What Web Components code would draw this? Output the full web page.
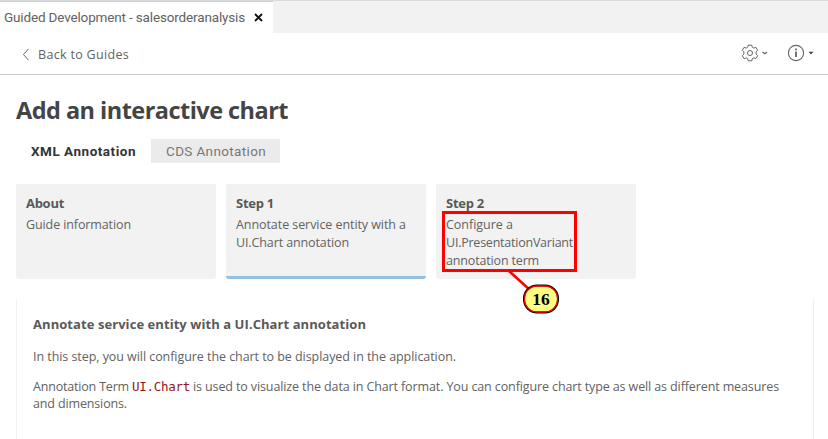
<!DOCTYPE html>
<html lang="en">
<head>
<meta charset="utf-8">
<title>Guided Development</title>
<style>
html,body{margin:0;height:100%;overflow:hidden;background:#fff}
body{font:12.5px/18px "Open Sans","Noto Sans",sans-serif;color:#626262}
</style>
</head>
<body>
<guide-app></guide-app>
<script>
const define = (name, html, setup) => customElements.define(name, class extends HTMLElement {
  connectedCallback() {
    if (this.shadowRoot) return;
    this.attachShadow({mode: 'open'}).innerHTML = html;
    if (setup) setup(this);
  }
});

// A single line of text whose tracking is set so that it fills the width in "w".
define('text-line', `<style>:host{display:block;white-space:pre;width:max-content}span{display:inline-block}</style><span><slot></slot></span>`, el => {
  const span = el.shadowRoot.querySelector('span');
  const n = el.textContent.length;
  const gap = (+el.getAttribute('w') - span.getBoundingClientRect().width) / n;
  span.style.letterSpacing = gap.toFixed(4) + 'px';
});

define('tab-strip', `<style>
:host{display:flex;height:33px;box-sizing:border-box;background:#f2f2f2;border-top:1px solid #d9dbe0;font:13.5px/18px Roboto,"Liberation Sans",sans-serif}
.tab{display:flex;box-sizing:border-box;width:273px;height:32px;background:#fff;border-top:1px solid #b9d5e4;padding:6px 0 0 4px}
svg{margin:5px 0 0 9px}
</style><div class="tab"><text-line w="241">Guided Development - salesorderanalysis</text-line>
<svg width="9" height="9" viewBox="0 0 9 9"><path d="M1 1l7 7M8 1l-7 7" stroke="#111" stroke-width="1.8"/></svg></div>`);

define('guide-toolbar', `<style>
:host{display:flex;height:42px;box-sizing:border-box;border-bottom:1px solid #ccc;padding-left:22px;align-items:flex-start}
.back{margin-top:15px}text-line{margin:13px auto 0 9px}
svg{flex:none;fill:none;stroke:#666}
.gear{margin:11px 0 0}.info{margin:11px 13px 0 18px}
</style>
<svg class="back" width="7" height="13" viewBox="0 0 7 13"><path d="M6.500 .8L1.500 6.500l5 5.700"/></svg>
<text-line w="91">Back to Guides</text-line>
<svg class="gear" width="28" height="18" viewBox="0 0 28 18"><path d="M7.200 1.200h3.600l.5 2.100 1.500.8 2.100-.8 1.800 3-1.600 1.600v2.200l1.600 1.600-1.800 3-2.100-.8-1.500.8-.5 2.100H7.200l-.5-2.100-1.500-.8-2.100.8-1.800-3 1.600-1.600V7.900L1.300 6.300l1.800-3 2.100.8 1.500-.8z"/><circle cx="9" cy="9" r="2.500"/><path d="M21.500 8l2.300 1.700L26 8" stroke-width="1.300"/></svg>
<svg class="info" width="28" height="18" viewBox="0 0 28 18"><circle cx="9" cy="9" r="7.600" stroke-width="1.100"/><path d="M9 7.500V13M9 4.500v1.700" stroke-width="1.800"/><path d="M21.500 7.800h5l-2.500 2.700z" fill="#444" stroke="none"/></svg>`);

define('kind-tab', `<style>
:host{display:block;box-sizing:border-box;height:24px;padding:3px 14px 0 15px;font:13.500px/18px Roboto,"Liberation Sans",sans-serif;color:#777;background:#ebebeb}
:host([selected]){padding-right:15px;background:none;font-weight:bold;color:#333}
</style><slot></slot>`);

define('step-card', `<style>
:host{display:block;box-sizing:border-box;width:200px;height:95px;padding:10px;background:#f2f2f2;border-radius:0 0 3px 3px}
:host([current]){border-bottom:3px solid #91c0e0}
.name{font-weight:bold;font-size:13px;color:#595959;margin-bottom:4px}
</style><div class="name"><slot name="name"></slot></div><slot></slot>`);

define('guide-panel', `<style>
:host{display:block;box-sizing:border-box;width:798px;height:140px;border:solid #f0f0f0;border-width:0 1px;padding:16px 16px 0}
.head{font-weight:bold;font-size:13px;color:#595959}
.p{margin-top:15px}.q{margin-top:12px;line-height:17px}
.row{display:flex;height:17px}
.code{font:12.500px/18px "DejaVu Sans Mono",monospace;color:#931818;margin:0 3px 0 3px}
</style>
<text-line class="head" w="333">Annotate service entity with a UI.Chart annotation</text-line>
<text-line class="p" w="423">In this step, you will configure the chart to be displayed in the application.</text-line>
<div class="q"><div class="row"><text-line w="96">Annotation Term</text-line><text-line class="code" w="58">UI.Chart</text-line><text-line w="586">is used to visualize the data in Chart format. You can configure chart type as well as different measures</text-line></div>
<text-line w="94">and dimensions.</text-line></div>`);

// Numbered marker laid over the page, pointing at the outlined text.
define('callout-mark', `<style>
:host{position:absolute;left:442px;top:211px;width:136px;height:104px}
svg{display:block}
</style><svg width="136" height="104" viewBox="0 0 136 104"><path d="M67 60L88 79" stroke="#f00" stroke-width="2.600"/><rect x="1.500" y="1.500" width="132" height="58" fill="none" stroke="#f00" stroke-width="3"/><rect x="82" y="74.500" width="34" height="27" rx="13" fill="#ffff80" stroke="#000" stroke-width="2"/><rect x="82.500" y="75" width="33" height="26" rx="12.500" fill="none" stroke="#f00" stroke-width="1.300"/><text x="99" y="94" text-anchor="middle" font-family="Liberation Serif,serif" font-weight="bold" font-size="17.500" fill="#000">16</text></svg>`);

define('guide-app', `<style>
:host{display:block;position:relative;height:439px;overflow:hidden}
main{padding:19px 16px 0}
.title{font-size:23.500px;line-height:32px;font-weight:bold;color:#444}
.kinds{display:flex;margin-top:13px}
.cards{display:flex;gap:10px;margin:21px 0 20px}
</style>
<tab-strip></tab-strip><guide-toolbar></guide-toolbar>
<main>
<text-line class="title" w="272">Add an interactive chart</text-line>
<div class="kinds"><kind-tab selected><text-line w="105">XML Annotation</text-line></kind-tab><kind-tab><text-line w="100">CDS Annotation</text-line></kind-tab></div>
<div class="cards">
<step-card><text-line slot="name" w="38">About</text-line><text-line w="105">Guide information</text-line></step-card>
<step-card current><text-line slot="name" w="38">Step 1</text-line><text-line w="170">Annotate service entity with a</text-line><text-line w="113">UI.Chart annotation</text-line></step-card>
<step-card><text-line slot="name" w="38">Step 2</text-line><text-line w="67">Configure a</text-line><text-line w="127">UI.PresentationVariant</text-line><text-line w="93">annotation term</text-line></step-card>
</div>
<guide-panel></guide-panel>
</main>
<callout-mark></callout-mark>`);
</script>
</body>
</html>
